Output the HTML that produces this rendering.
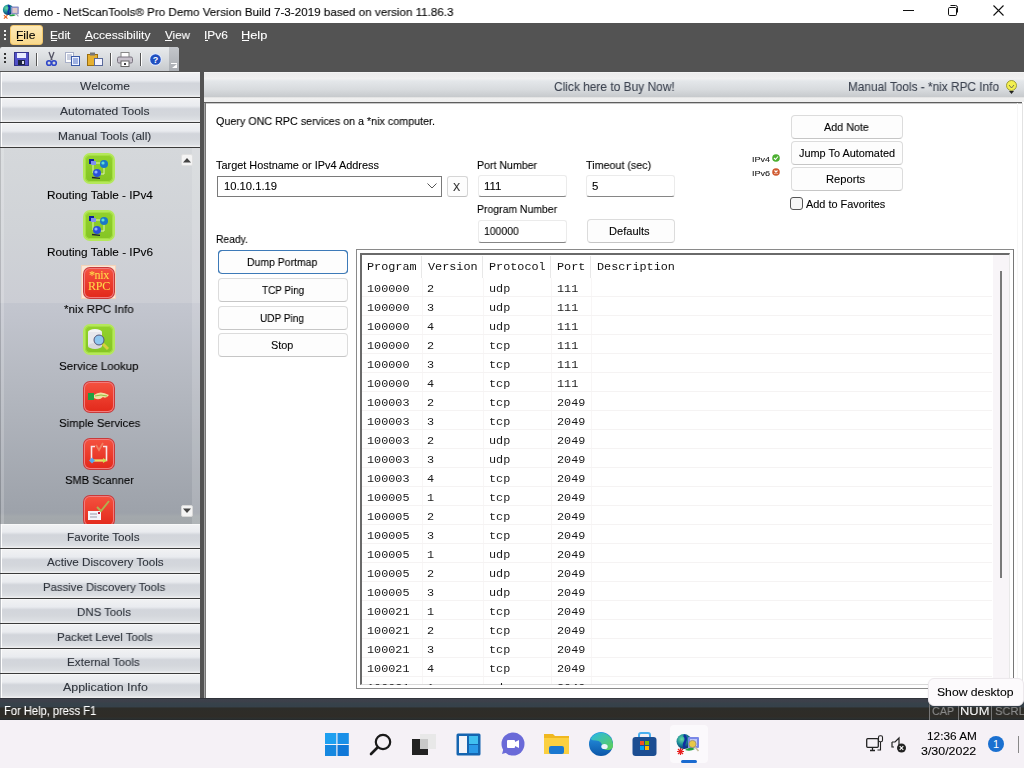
<!DOCTYPE html>
<html><head><meta charset="utf-8"><style>
*{box-sizing:border-box;margin:0;padding:0}
html,body{width:1024px;height:768px;overflow:hidden}
body{position:relative;background:#535353;font-family:"Liberation Sans",sans-serif}
.a{position:absolute}
.t{position:absolute;white-space:nowrap;will-change:transform;-webkit-text-stroke:0.1px currentColor}
svg{position:absolute;overflow:visible}
</style></head><body>
<div class="a" style="left:0px;top:0px;width:1024px;height:23px;background:#fff"></div>
<svg style="left:1px;top:3px" width="20" height="17" viewBox="0 0 28 24"><defs><radialGradient id="gl2" cx="0.35" cy="0.35" r="0.7"><stop offset="0" stop-color="#6ae0a0"/><stop offset="0.5" stop-color="#1a8a9a"/><stop offset="1" stop-color="#0a2a6a"/></radialGradient></defs><circle cx="10" cy="9.5" r="7.5" fill="url(#gl2)"/><path d="M10 3 q3 3 1 7 q-2 3 0 6" stroke="#1030a0" stroke-width="2.5" fill="none"/><rect x="14" y="5" width="11" height="11" rx="1" fill="#8a90c8"/><rect x="16" y="7" width="7" height="7" fill="#e0c8c8"/><path d="M21 15 l3.5 4" stroke="#a0a0b0" stroke-width="1.6"/><path d="M11 18 q5-4 10-1 q-5 3-10 1z" fill="#20a040"/><path d="M4 17 l5 5 M9 17 l-5 5" stroke="#e86020" stroke-width="1.6"/></svg>
<div class="t " style="left:23.53px;top:5px;font-size:11.700px;line-height:13px;color:#000;font-family:'Liberation Sans',sans-serif;transform:scaleX(0.9960);transform-origin:0 0;">demo - NetScanTools® Pro Demo Version Build 7-3-2019 based on version 11.86.3</div>
<div class="a" style="left:903px;top:10px;width:11px;height:1px;background:#111"></div>
<svg style="left:946px;top:4px" width="14" height="14" viewBox="0 0 14 14"><rect x="2.5" y="3.5" width="8" height="8" rx="1.2" fill="none" stroke="#111" stroke-width="1"/><path d="M4.5 1.5 h5 a2 2 0 0 1 2 2 v5" fill="none" stroke="#111" stroke-width="1"/></svg>
<svg style="left:993px;top:5px" width="12" height="12" viewBox="0 0 12 12"><path d="M0.5 0.5 L10.5 10.5 M10.5 0.5 L0.5 10.5" stroke="#111" stroke-width="1.1"/></svg>
<div class="a" style="left:0px;top:23px;width:1024px;height:23px;background:#535353"></div>
<div class="a" style="left:4px;top:30px;width:2px;height:2px;background:#f0f0f0"></div>
<div class="a" style="left:4px;top:34px;width:2px;height:2px;background:#f0f0f0"></div>
<div class="a" style="left:4px;top:38px;width:2px;height:2px;background:#f0f0f0"></div>
<div class="a" style="left:10px;top:25px;width:33px;height:20px;background:linear-gradient(#fde9b6,#f9d98d);border:1px solid #f3c86b;border-radius:3px"></div>
<div class="t " style="left:16.13px;top:28px;font-size:11.700px;line-height:13px;color:#000;font-family:'Liberation Sans',sans-serif;transform:scaleX(1.0313);transform-origin:0 0;">File</div>
<div class="a" style="left:17px;top:40px;width:6px;height:1px;background:#000"></div>
<div class="t " style="left:49.55px;top:28px;font-size:11.700px;line-height:13px;color:#fff;font-family:'Liberation Sans',sans-serif;transform:scaleX(1.0101);transform-origin:0 0;">Edit</div>
<div class="a" style="left:51px;top:40px;width:6px;height:1px;background:#fff"></div>
<div class="t " style="left:84.50px;top:28px;font-size:11.700px;line-height:13px;color:#fff;font-family:'Liberation Sans',sans-serif;transform:scaleX(1.0272);transform-origin:0 0;">Accessibility</div>
<div class="a" style="left:85px;top:40px;width:7px;height:1px;background:#fff"></div>
<div class="t " style="left:165.00px;top:28px;font-size:11.700px;line-height:13px;color:#fff;font-family:'Liberation Sans',sans-serif;transform:scaleX(0.9892);transform-origin:0 0;">View</div>
<div class="a" style="left:165px;top:40px;width:7px;height:1px;background:#fff"></div>
<div class="t " style="left:204.13px;top:28px;font-size:11.700px;line-height:13px;color:#fff;font-family:'Liberation Sans',sans-serif;transform:scaleX(1.0192);transform-origin:0 0;">IPv6</div>
<div class="a" style="left:205px;top:40px;width:3px;height:1px;background:#fff"></div>
<div class="t " style="left:240.98px;top:28px;font-size:11.700px;line-height:13px;color:#fff;font-family:'Liberation Sans',sans-serif;transform:scaleX(1.0926);transform-origin:0 0;">Help</div>
<div class="a" style="left:242px;top:40px;width:7px;height:1px;background:#fff"></div>
<div class="a" style="left:0px;top:47px;width:179px;height:24px;background:linear-gradient(#e8eaec,#d9dcdf 50%,#c6c9cd);border-top-right-radius:3px;border-top-left-radius:2px"></div>
<div class="a" style="left:169px;top:47px;width:10px;height:24px;background:linear-gradient(#c4c7cb,#a9adb2);border-top-right-radius:3px"></div>
<div class="a" style="left:4px;top:53px;width:2px;height:2px;background:#333"></div>
<div class="a" style="left:4px;top:57px;width:2px;height:2px;background:#333"></div>
<div class="a" style="left:4px;top:61px;width:2px;height:2px;background:#333"></div>
<svg style="left:14px;top:52px" width="15" height="14" viewBox="0 0 15 14"><rect x="0.5" y="0.5" width="14" height="13" fill="#5050c8" stroke="#34348a"/><rect x="3" y="1" width="9" height="5" fill="#e8ecff"/><rect x="4" y="8" width="7" height="5" fill="#1c2440"/><rect x="8" y="9" width="2" height="3" fill="#dde"/></svg>
<div class="a" style="left:36px;top:53px;width:1px;height:13px;background:#555"></div>
<div class="a" style="left:37px;top:53px;width:1px;height:13px;background:#fff"></div>
<svg style="left:46px;top:52px" width="11" height="14" viewBox="0 0 11 14"><path d="M3 0 L6 8 M8 0 L5 8" stroke="#556" stroke-width="1.3"/><circle cx="3" cy="11" r="2.3" fill="none" stroke="#2f46c8" stroke-width="1.6"/><circle cx="8" cy="11" r="2.3" fill="none" stroke="#2f46c8" stroke-width="1.6"/></svg>
<svg style="left:65px;top:52px" width="15" height="14" viewBox="0 0 15 14"><rect x="0.5" y="0.5" width="8" height="10" fill="#fff" stroke="#a8b0c8"/><path d="M2 3h5M2 5h5M2 7h5" stroke="#7a88b0" stroke-width="0.8"/><rect x="6.5" y="4.5" width="8" height="9" fill="#f0f4ff" stroke="#3a5aa8"/><path d="M8 7h5M8 9h5M8 11h5" stroke="#3a60c0" stroke-width="0.9"/></svg>
<svg style="left:87px;top:52px" width="16" height="14" viewBox="0 0 16 14"><rect x="0.5" y="2.5" width="10" height="11" fill="#e6b030" stroke="#9a6e10"/><rect x="3" y="0.5" width="5" height="3" fill="#777"/><rect x="7.5" y="6.5" width="8" height="7" fill="#f4f4ff" stroke="#5a6a9a"/></svg>
<div class="a" style="left:110px;top:53px;width:1px;height:13px;background:#555"></div>
<div class="a" style="left:111px;top:53px;width:1px;height:13px;background:#fff"></div>
<svg style="left:117px;top:52px" width="16" height="15" viewBox="0 0 16 15"><rect x="4" y="0.5" width="8" height="5" fill="#fff" stroke="#888"/><rect x="0.5" y="5" width="15" height="6" rx="1.5" fill="#c8c2cc" stroke="#7a7480"/><rect x="4" y="9" width="8" height="5.5" fill="#fff" stroke="#666"/><rect x="7" y="11" width="2" height="2" fill="#444"/></svg>
<div class="a" style="left:140px;top:53px;width:1px;height:13px;background:#555"></div>
<div class="a" style="left:141px;top:53px;width:1px;height:13px;background:#fff"></div>
<svg style="left:149px;top:53px" width="13" height="13" viewBox="0 0 13 13"><circle cx="6.5" cy="6.5" r="6.3" fill="#dfe8ff"/><circle cx="6.5" cy="6.5" r="5.3" fill="#1f4fc0"/><text x="6.5" y="10" font-size="9" font-weight="bold" text-anchor="middle" fill="#fff" font-family="Liberation Sans">?</text></svg>
<div class="a" style="left:171px;top:63px;width:6px;height:1px;background:#fff"></div>
<svg style="left:171px;top:64px" width="7" height="5" viewBox="0 0 7 5"><path d="M1 4 L6 4 L6 0z" fill="#fff"/></svg>
<div class="a" style="left:0px;top:72px;width:200px;height:25px;background:linear-gradient(#fdfdfd 0,#f0f1f3 5%,#e9ebef 33%,#d2d5db 45%,#d4d7dc 70%,#dcdfe3 90%,#e8e9ec 95%,#f0f0f0 100%);border-left:1px solid #fff;box-shadow:inset 1px 0 0 #fff"></div>
<div class="a" style="left:0px;top:72px;width:1px;height:25px;background:#b9bcc1"></div>
<div class="t " style="left:79.80px;top:79px;font-size:11.700px;line-height:13px;color:#30353d;font-family:'Liberation Sans',sans-serif;transform:scaleX(1.0294);transform-origin:0 0;">Welcome</div>
<div class="a" style="left:0px;top:97px;width:200px;height:1px;background:#3a3a3a"></div>
<div class="a" style="left:0px;top:98px;width:200px;height:24px;background:linear-gradient(#fdfdfd 0,#f0f1f3 5%,#e9ebef 33%,#d2d5db 45%,#d4d7dc 70%,#dcdfe3 90%,#e8e9ec 95%,#f0f0f0 100%);border-left:1px solid #fff;box-shadow:inset 1px 0 0 #fff"></div>
<div class="a" style="left:0px;top:98px;width:1px;height:24px;background:#b9bcc1"></div>
<div class="t " style="left:59.70px;top:104px;font-size:11.700px;line-height:13px;color:#30353d;font-family:'Liberation Sans',sans-serif;transform:scaleX(1.0314);transform-origin:0 0;">Automated Tools</div>
<div class="a" style="left:0px;top:122px;width:200px;height:1px;background:#3a3a3a"></div>
<div class="a" style="left:0px;top:123px;width:200px;height:24px;background:linear-gradient(#fdfdfd 0,#f0f1f3 5%,#e9ebef 33%,#d2d5db 45%,#d4d7dc 70%,#dcdfe3 90%,#e8e9ec 95%,#f0f0f0 100%);border-left:1px solid #fff;box-shadow:inset 1px 0 0 #fff"></div>
<div class="a" style="left:0px;top:123px;width:1px;height:24px;background:#b9bcc1"></div>
<div class="t " style="left:57.64px;top:129px;font-size:11.700px;line-height:13px;color:#30353d;font-family:'Liberation Sans',sans-serif;transform:scaleX(1.0216);transform-origin:0 0;">Manual Tools (all)</div>
<div class="a" style="left:0px;top:147px;width:200px;height:1px;background:#3a3a3a"></div>
<div class="a" style="left:0px;top:148px;width:200px;height:376px;background:linear-gradient(#d5d8db 0,#d0d3d7 22%,#cbcdd4 41.2%,#c3c6cf 41.3%,#b3b7bf 65%,#9da2aa 97%,#a3a8ac 98%,#a2a7ab 100%)"></div>
<div class="a" style="left:1px;top:148px;width:3px;height:376px;background:rgba(255,255,255,0.18)"></div>
<div class="a" style="left:0px;top:148px;width:1px;height:376px;background:rgba(0,0,0,0.12)"></div>
<div class="a" style="left:192px;top:148px;width:8px;height:376px;background:rgba(255,255,255,0.15)"></div>
<div class="a" style="left:181px;top:154px;width:12px;height:12px;background:#f4f4f4;border:1px solid #e0e0e0;border-radius:2px"></div>
<svg style="left:182px;top:157px" width="10" height="6" viewBox="0 0 10 6"><path d="M1 5.5 L5 1 L9 5.5z" fill="#444"/></svg>
<div class="a" style="left:181px;top:505px;width:12px;height:12px;background:#f4f4f4;border:1px solid #d8d8d8;border-radius:2px"></div>
<svg style="left:182px;top:508px" width="10" height="6" viewBox="0 0 10 6"><path d="M1 0.5 L5 5 L9 0.5z" fill="#444"/></svg>
<div class="a" style="left:83px;top:153px;width:32px;height:31px;border-radius:7px;background:#b4e85a"></div>
<div class="a" style="left:85px;top:155px;width:28px;height:27px;border-radius:5px;background:linear-gradient(#92d22c,#84c424);box-shadow:inset 0 0 0 1px #a6de44"></div>
<svg style="left:84px;top:155px" width="29" height="28" viewBox="0 0 29 28"><path d="M9 8 h10 M9 8 v10 M20 10 v9 h-8" stroke="#dff5b0" stroke-width="1" fill="none"/><rect x="5" y="4" width="5" height="5" fill="#1020a0"/><rect x="7" y="6" width="5" height="4" fill="#8090f0"/><circle cx="20" cy="9" r="4" fill="#1a78c8"/><circle cx="19" cy="8" r="1.6" fill="#60e0d0"/><circle cx="13" cy="18" r="4" fill="#2a50d8"/><circle cx="12" cy="17" r="1.6" fill="#90b0ff"/><path d="M8 22.5 l8 0.8" stroke="#223" stroke-width="1.3"/></svg>
<div class="t " style="left:46.56px;top:188px;font-size:11.700px;line-height:13px;color:#000;font-family:'Liberation Sans',sans-serif;transform:scaleX(1.0077);transform-origin:0 0;">Routing Table - IPv4</div>
<div class="a" style="left:83px;top:210px;width:32px;height:31px;border-radius:7px;background:#b4e85a"></div>
<div class="a" style="left:85px;top:212px;width:28px;height:27px;border-radius:5px;background:linear-gradient(#92d22c,#84c424);box-shadow:inset 0 0 0 1px #a6de44"></div>
<svg style="left:84px;top:212px" width="29" height="28" viewBox="0 0 29 28"><path d="M9 8 h10 M9 8 v10 M20 10 v9 h-8" stroke="#dff5b0" stroke-width="1" fill="none"/><rect x="5" y="4" width="5" height="5" fill="#1020a0"/><rect x="7" y="6" width="5" height="4" fill="#8090f0"/><circle cx="20" cy="9" r="4" fill="#1a78c8"/><circle cx="19" cy="8" r="1.6" fill="#60e0d0"/><circle cx="13" cy="18" r="4" fill="#2a50d8"/><circle cx="12" cy="17" r="1.6" fill="#90b0ff"/><path d="M8 22.5 l8 0.8" stroke="#223" stroke-width="1.3"/></svg>
<div class="t " style="left:46.56px;top:245px;font-size:11.700px;line-height:13px;color:#000;font-family:'Liberation Sans',sans-serif;transform:scaleX(1.0089);transform-origin:0 0;">Routing Table - IPv6</div>
<div class="a" style="left:81px;top:265px;width:35px;height:34px;background:#fbe6d6;border:1px solid #f3d2b8"></div>
<div class="a" style="left:83px;top:267px;width:32px;height:32px;border-radius:7px;background:#c83a3a"></div>
<div class="a" style="left:84px;top:268px;width:30px;height:30px;border-radius:6px;background:#f27c7c"></div>
<div class="a" style="left:85px;top:269px;width:28px;height:28px;border-radius:5px;background:linear-gradient(#f4503e,#e32a1c)"></div>
<div class="t" style="left:85px;top:270px;width:28px;text-align:center;font-family:'Liberation Serif',serif;font-size:12px;line-height:11px;color:#ffd84a;letter-spacing:-0.3px">*nix<br>RPC</div>
<div class="t " style="left:64.08px;top:302px;font-size:11.700px;line-height:13px;color:#000;font-family:'Liberation Sans',sans-serif;transform:scaleX(0.9924);transform-origin:0 0;">*nix RPC Info</div>
<div class="a" style="left:83px;top:324px;width:32px;height:31px;border-radius:7px;background:#b4e85a"></div>
<div class="a" style="left:85px;top:326px;width:28px;height:27px;border-radius:5px;background:linear-gradient(#92d22c,#84c424);box-shadow:inset 0 0 0 1px #a6de44"></div>
<svg style="left:84px;top:326px" width="29" height="28" viewBox="0 0 29 28"><ellipse cx="11" cy="6" rx="7" ry="3" fill="#f4f4f4"/><rect x="4" y="6" width="14" height="14" fill="#e8e8ec"/><ellipse cx="11" cy="20" rx="7" ry="3" fill="#d8d8dc"/><circle cx="15" cy="14" r="5" fill="#8fc8f0" stroke="#557" stroke-width="1"/><path d="M19 18 l5 5" stroke="#d8d040" stroke-width="3"/></svg>
<div class="t " style="left:59.04px;top:359px;font-size:11.700px;line-height:13px;color:#000;font-family:'Liberation Sans',sans-serif;transform:scaleX(0.9888);transform-origin:0 0;">Service Lookup</div>
<div class="a" style="left:83px;top:381px;width:32px;height:32px;border-radius:7px;background:#c83a3a"></div>
<div class="a" style="left:84px;top:382px;width:30px;height:30px;border-radius:6px;background:#f27c7c"></div>
<div class="a" style="left:85px;top:383px;width:28px;height:28px;border-radius:5px;background:linear-gradient(#f4503e,#e32a1c)"></div>
<svg style="left:85px;top:383px" width="28" height="28" viewBox="0 0 28 28"><rect x="3" y="10" width="6" height="7" fill="#20a040"/><path d="M9 12 q6-5 15 0 q-3 4-6 2 q-4 4-9 1z" fill="#f0e0a0"/><path d="M10 13 q6 -2 12 0" stroke="#90c040" stroke-width="1" fill="none"/></svg>
<div class="t " style="left:59.05px;top:416px;font-size:11.700px;line-height:13px;color:#000;font-family:'Liberation Sans',sans-serif;transform:scaleX(0.9691);transform-origin:0 0;">Simple Services</div>
<div class="a" style="left:83px;top:438px;width:32px;height:32px;border-radius:7px;background:#c83a3a"></div>
<div class="a" style="left:84px;top:439px;width:30px;height:30px;border-radius:6px;background:#f27c7c"></div>
<div class="a" style="left:85px;top:440px;width:28px;height:28px;border-radius:5px;background:linear-gradient(#f4503e,#e32a1c)"></div>
<svg style="left:85px;top:440px" width="28" height="28" viewBox="0 0 28 28"><path d="M10 6.5 H6.5 V20.5 H21.5 V6.5 H18" stroke="#f8e8e8" stroke-width="1.6" fill="none"/><path d="M11 5 l3 5 l4-7" stroke="#f08060" stroke-width="1.8" fill="none"/><path d="M8 20.5 h12" stroke="#e8e060" stroke-width="2"/><path d="M7 17.5 l3 3 l-3 3 l-3-3z" fill="#58a8f0"/><path d="M18 18 l4 2.5 l-4 2.5z" fill="#c8e050"/></svg>
<div class="t " style="left:64.95px;top:473px;font-size:11.700px;line-height:13px;color:#000;font-family:'Liberation Sans',sans-serif;transform:scaleX(0.9546);transform-origin:0 0;">SMB Scanner</div>
<div class="a" style="left:83px;top:495px;width:32px;height:32px;border-radius:7px;background:#c83a3a"></div>
<div class="a" style="left:84px;top:496px;width:30px;height:30px;border-radius:6px;background:#f27c7c"></div>
<div class="a" style="left:85px;top:497px;width:28px;height:28px;border-radius:5px;background:linear-gradient(#f4503e,#e32a1c)"></div>
<svg style="left:85px;top:497px" width="28" height="28" viewBox="0 0 28 28"><rect x="3" y="14" width="13" height="9" fill="#f4f4f8"/><path d="M5 17h7M5 20h7" stroke="#99a" stroke-width="1"/><rect x="13" y="15" width="2" height="2" fill="#c02040"/><path d="M12 10 l4 4 l8-10" stroke="#b0b050" stroke-width="2" fill="none"/></svg>
<div class="a" style="left:0px;top:524px;width:200px;height:24px;background:linear-gradient(#fdfdfd 0,#f0f1f3 5%,#e9ebef 33%,#d2d5db 45%,#d4d7dc 70%,#dcdfe3 90%,#e8e9ec 95%,#f0f0f0 100%);border-left:1px solid #fff;box-shadow:inset 1px 0 0 #fff"></div>
<div class="a" style="left:0px;top:524px;width:1px;height:24px;background:#b9bcc1"></div>
<div class="t " style="left:67.46px;top:530px;font-size:11.700px;line-height:13px;color:#30353d;font-family:'Liberation Sans',sans-serif;">Favorite Tools</div>
<div class="a" style="left:0px;top:548px;width:200px;height:1px;background:#3a3a3a"></div>
<div class="a" style="left:0px;top:549px;width:200px;height:24px;background:linear-gradient(#fdfdfd 0,#f0f1f3 5%,#e9ebef 33%,#d2d5db 45%,#d4d7dc 70%,#dcdfe3 90%,#e8e9ec 95%,#f0f0f0 100%);border-left:1px solid #fff;box-shadow:inset 1px 0 0 #fff"></div>
<div class="a" style="left:0px;top:549px;width:1px;height:24px;background:#b9bcc1"></div>
<div class="t " style="left:46.80px;top:555px;font-size:11.700px;line-height:13px;color:#30353d;font-family:'Liberation Sans',sans-serif;">Active Discovery Tools</div>
<div class="a" style="left:0px;top:573px;width:200px;height:1px;background:#3a3a3a"></div>
<div class="a" style="left:0px;top:574px;width:200px;height:24px;background:linear-gradient(#fdfdfd 0,#f0f1f3 5%,#e9ebef 33%,#d2d5db 45%,#d4d7dc 70%,#dcdfe3 90%,#e8e9ec 95%,#f0f0f0 100%);border-left:1px solid #fff;box-shadow:inset 1px 0 0 #fff"></div>
<div class="a" style="left:0px;top:574px;width:1px;height:24px;background:#b9bcc1"></div>
<div class="t " style="left:42.59px;top:580px;font-size:11.700px;line-height:13px;color:#30353d;font-family:'Liberation Sans',sans-serif;transform:scaleX(0.9711);transform-origin:0 0;">Passive Discovery Tools</div>
<div class="a" style="left:0px;top:598px;width:200px;height:1px;background:#3a3a3a"></div>
<div class="a" style="left:0px;top:599px;width:200px;height:24px;background:linear-gradient(#fdfdfd 0,#f0f1f3 5%,#e9ebef 33%,#d2d5db 45%,#d4d7dc 70%,#dcdfe3 90%,#e8e9ec 95%,#f0f0f0 100%);border-left:1px solid #fff;box-shadow:inset 1px 0 0 #fff"></div>
<div class="a" style="left:0px;top:599px;width:1px;height:24px;background:#b9bcc1"></div>
<div class="t " style="left:77.38px;top:605px;font-size:11.700px;line-height:13px;color:#30353d;font-family:'Liberation Sans',sans-serif;transform:scaleX(0.9792);transform-origin:0 0;">DNS Tools</div>
<div class="a" style="left:0px;top:623px;width:200px;height:1px;background:#3a3a3a"></div>
<div class="a" style="left:0px;top:624px;width:200px;height:24px;background:linear-gradient(#fdfdfd 0,#f0f1f3 5%,#e9ebef 33%,#d2d5db 45%,#d4d7dc 70%,#dcdfe3 90%,#e8e9ec 95%,#f0f0f0 100%);border-left:1px solid #fff;box-shadow:inset 1px 0 0 #fff"></div>
<div class="a" style="left:0px;top:624px;width:1px;height:24px;background:#b9bcc1"></div>
<div class="t " style="left:56.58px;top:630px;font-size:11.700px;line-height:13px;color:#30353d;font-family:'Liberation Sans',sans-serif;transform:scaleX(0.9827);transform-origin:0 0;">Packet Level Tools</div>
<div class="a" style="left:0px;top:648px;width:200px;height:1px;background:#3a3a3a"></div>
<div class="a" style="left:0px;top:649px;width:200px;height:24px;background:linear-gradient(#fdfdfd 0,#f0f1f3 5%,#e9ebef 33%,#d2d5db 45%,#d4d7dc 70%,#dcdfe3 90%,#e8e9ec 95%,#f0f0f0 100%);border-left:1px solid #fff;box-shadow:inset 1px 0 0 #fff"></div>
<div class="a" style="left:0px;top:649px;width:1px;height:24px;background:#b9bcc1"></div>
<div class="t " style="left:67.47px;top:655px;font-size:11.700px;line-height:13px;color:#30353d;font-family:'Liberation Sans',sans-serif;transform:scaleX(0.9937);transform-origin:0 0;">External Tools</div>
<div class="a" style="left:0px;top:673px;width:200px;height:1px;background:#3a3a3a"></div>
<div class="a" style="left:0px;top:674px;width:200px;height:24px;background:linear-gradient(#fdfdfd 0,#f0f1f3 5%,#e9ebef 33%,#d2d5db 45%,#d4d7dc 70%,#dcdfe3 90%,#e8e9ec 95%,#f0f0f0 100%);border-left:1px solid #fff;box-shadow:inset 1px 0 0 #fff"></div>
<div class="a" style="left:0px;top:674px;width:1px;height:24px;background:#b9bcc1"></div>
<div class="t " style="left:62.50px;top:680px;font-size:11.700px;line-height:13px;color:#30353d;font-family:'Liberation Sans',sans-serif;transform:scaleX(1.0608);transform-origin:0 0;">Application Info</div>
<div class="a" style="left:204px;top:72px;width:820px;height:627px;background:#fff"></div>
<div class="a" style="left:204px;top:72px;width:820px;height:30px;background:linear-gradient(#f8f8f8 0,#ededed 4%,#efefef 17%,#f1f1f1 22%,#e4e7ea 30%,#d7dadd 60%,#c7cacd 82%,#d8d8d8 83.3%,#efefef 86.6%,#f0f0f0 100%)"></div>
<div class="a" style="left:204px;top:102px;width:818px;height:1px;background:#5e5e5e"></div>
<div class="a" style="left:204px;top:103px;width:818px;height:1px;background:#c8c8c8"></div>
<div class="t " style="left:553.80px;top:80px;font-size:12.700px;line-height:14px;color:#3c4350;font-family:'Liberation Sans',sans-serif;transform:scaleX(0.9405);transform-origin:0 0;">Click here to Buy Now!</div>
<div class="t " style="left:847.55px;top:80px;font-size:12.700px;line-height:14px;color:#3c4350;font-family:'Liberation Sans',sans-serif;transform:scaleX(0.9324);transform-origin:0 0;">Manual Tools - *nix RPC Info</div>
<svg style="left:1005px;top:80px" width="13" height="14" viewBox="0 0 13 14"><circle cx="6.5" cy="5.5" r="5" fill="#f4f050" stroke="#8a8a20" stroke-width="0.8"/><path d="M4 5 l2.5 3 l2.5-3" stroke="#555" fill="none" stroke-width="0.8"/><path d="M4 11 h5 l-2.5 3z" fill="#222"/></svg>
<div class="a" style="left:204px;top:103px;width:1px;height:595px;background:#a4a4a4"></div>
<div class="a" style="left:205px;top:103px;width:1px;height:595px;background:#747474"></div>
<div class="a" style="left:1017px;top:103px;width:1px;height:595px;background:#f6f6f6"></div>
<div class="a" style="left:1022px;top:103px;width:1px;height:595px;background:#e2e2e2"></div>
<div class="t " style="left:216.17px;top:115px;font-size:10.900px;line-height:12px;color:#000;font-family:'Liberation Sans',sans-serif;transform:scaleX(0.9862);transform-origin:0 0;">Query ONC RPC services on a *nix computer.</div>
<div class="t " style="left:216.38px;top:159px;font-size:10.900px;line-height:12px;color:#000;font-family:'Liberation Sans',sans-serif;">Target Hostname or IPv4 Address</div>
<div class="a" style="left:217px;top:176px;width:225px;height:21px;background:#fff;border:1px solid #7a7a7a"></div>
<div class="t " style="left:223.61px;top:180px;font-size:10.900px;line-height:12px;color:#000;font-family:'Liberation Sans',sans-serif;transform:scaleX(1.0309);transform-origin:0 0;">10.10.1.19</div>
<svg style="left:427px;top:183px" width="10" height="6" viewBox="0 0 10 6"><path d="M0.5 0.5 L5 5 L9.5 0.5" stroke="#555" fill="none" stroke-width="1"/></svg>
<div class="a" style="left:447px;top:176px;width:21px;height:21px;background:#fdfdfd;border:1px solid #d6d6d6;border-bottom-color:#c0c0c0;border-radius:3px"></div>
<div class="t " style="left:453.09px;top:181px;font-size:10.900px;line-height:12px;color:#222;font-family:'Liberation Sans',sans-serif;transform:scaleX(0.9757);transform-origin:0 0;">X</div>
<div class="t " style="left:476.75px;top:159px;font-size:10.900px;line-height:12px;color:#000;font-family:'Liberation Sans',sans-serif;transform:scaleX(0.9733);transform-origin:0 0;">Port Number</div>
<div class="t " style="left:585.78px;top:159px;font-size:10.900px;line-height:12px;color:#000;font-family:'Liberation Sans',sans-serif;transform:scaleX(0.9862);transform-origin:0 0;">Timeout (sec)</div>
<div class="a" style="left:478px;top:175px;width:89px;height:22px;background:#fff;border:1px solid #ebebeb;border-bottom:1px solid #868686;border-radius:3px"></div>
<div class="a" style="left:586px;top:175px;width:89px;height:22px;background:#fff;border:1px solid #ebebeb;border-bottom:1px solid #868686;border-radius:3px"></div>
<div class="t " style="left:484.20px;top:180px;font-size:10.900px;line-height:12px;color:#000;font-family:'Liberation Sans',sans-serif;transform:scaleX(1.0485);transform-origin:0 0;">111</div>
<div class="t " style="left:592.04px;top:180px;font-size:10.900px;line-height:12px;color:#000;font-family:'Liberation Sans',sans-serif;transform:scaleX(1.0512);transform-origin:0 0;">5</div>
<div class="t " style="left:476.76px;top:203px;font-size:10.900px;line-height:12px;color:#000;font-family:'Liberation Sans',sans-serif;transform:scaleX(0.9586);transform-origin:0 0;">Program Number</div>
<div class="a" style="left:478px;top:220px;width:89px;height:23px;background:#fff;border:1px solid #ebebeb;border-bottom:1px solid #868686;border-radius:3px"></div>
<div class="t " style="left:484.27px;top:225px;font-size:10.900px;line-height:12px;color:#000;font-family:'Liberation Sans',sans-serif;transform:scaleX(0.9572);transform-origin:0 0;">100000</div>
<div class="a" style="left:587px;top:219px;width:88px;height:24px;background:#fdfdfd;border:1px solid #dcdcdc;border-bottom-color:#c6c6c6;border-radius:4px"></div>
<div class="t " style="left:608.61px;top:225px;font-size:10.900px;line-height:12px;color:#000;font-family:'Liberation Sans',sans-serif;transform:scaleX(1.0179);transform-origin:0 0;">Defaults</div>
<div class="a" style="left:791px;top:115px;width:112px;height:24px;background:#fdfdfd;border:1px solid #dcdcdc;border-bottom-color:#c6c6c6;border-radius:4px"></div>
<div class="t " style="left:823.90px;top:121px;font-size:10.900px;line-height:12px;color:#000;font-family:'Liberation Sans',sans-serif;transform:scaleX(0.9885);transform-origin:0 0;">Add Note</div>
<div class="a" style="left:791px;top:141px;width:112px;height:24px;background:#fdfdfd;border:1px solid #dcdcdc;border-bottom-color:#c6c6c6;border-radius:4px"></div>
<div class="t " style="left:798.79px;top:147px;font-size:10.900px;line-height:12px;color:#000;font-family:'Liberation Sans',sans-serif;">Jump To Automated</div>
<div class="a" style="left:791px;top:167px;width:112px;height:24px;background:#fdfdfd;border:1px solid #dcdcdc;border-bottom-color:#c6c6c6;border-radius:4px"></div>
<div class="t " style="left:826.40px;top:173px;font-size:10.900px;line-height:12px;color:#000;font-family:'Liberation Sans',sans-serif;transform:scaleX(1.0284);transform-origin:0 0;">Reports</div>
<div class="a" style="left:790px;top:197px;width:13px;height:13px;background:#f6f6f6;border:1px solid #555;border-radius:3px"></div>
<div class="t " style="left:806.00px;top:198px;font-size:10.900px;line-height:12px;color:#000;font-family:'Liberation Sans',sans-serif;">Add to Favorites</div>
<div class="t " style="left:752.19px;top:155px;font-size:7.600px;line-height:9px;color:#222;font-family:'Liberation Sans',sans-serif;transform:scaleX(1.1898);transform-origin:0 0;">IPv4</div>
<div class="t " style="left:752.18px;top:169px;font-size:7.600px;line-height:9px;color:#222;font-family:'Liberation Sans',sans-serif;transform:scaleX(1.1962);transform-origin:0 0;">IPv6</div>
<svg style="left:772px;top:154px" width="8" height="8" viewBox="0 0 8 8"><circle cx="4" cy="4" r="3.8" fill="#4caf30"/><path d="M2 4 l1.5 1.5 l2.5-3" stroke="#fff" stroke-width="1.1" fill="none"/></svg>
<svg style="left:772px;top:168px" width="8" height="8" viewBox="0 0 8 8"><circle cx="4" cy="4" r="3.8" fill="#d05a30"/><path d="M2.5 2.5 l3 3 M5.5 2.5 l-3 3" stroke="#fff" stroke-width="1.1"/></svg>
<div class="t " style="left:215.98px;top:233px;font-size:10.900px;line-height:12px;color:#000;font-family:'Liberation Sans',sans-serif;transform:scaleX(0.9456);transform-origin:0 0;">Ready.</div>
<div class="a" style="left:218px;top:250px;width:130px;height:24px;background:#fdfdfd;border:1px solid #3d7ab8;border-bottom-color:#c6c6c6;border-radius:4px"></div>
<div class="t " style="left:246.96px;top:256px;font-size:10.900px;line-height:12px;color:#000;font-family:'Liberation Sans',sans-serif;transform:scaleX(0.9605);transform-origin:0 0;">Dump Portmap</div>
<div class="a" style="left:218px;top:250px;width:130px;height:24px;border:1px solid #3d7ab8;border-radius:4px"></div>
<div class="a" style="left:218px;top:278px;width:130px;height:24px;background:#fdfdfd;border:1px solid #dcdcdc;border-bottom-color:#c6c6c6;border-radius:4px"></div>
<div class="t " style="left:261.60px;top:284px;font-size:10.900px;line-height:12px;color:#000;font-family:'Liberation Sans',sans-serif;transform:scaleX(0.9109);transform-origin:0 0;">TCP Ping</div>
<div class="a" style="left:218px;top:306px;width:130px;height:24px;background:#fdfdfd;border:1px solid #dcdcdc;border-bottom-color:#c6c6c6;border-radius:4px"></div>
<div class="t " style="left:259.90px;top:312px;font-size:10.900px;line-height:12px;color:#000;font-family:'Liberation Sans',sans-serif;transform:scaleX(0.9239);transform-origin:0 0;">UDP Ping</div>
<div class="a" style="left:218px;top:333px;width:130px;height:24px;background:#fdfdfd;border:1px solid #dcdcdc;border-bottom-color:#c6c6c6;border-radius:4px"></div>
<div class="t " style="left:271.37px;top:339px;font-size:10.900px;line-height:12px;color:#000;font-family:'Liberation Sans',sans-serif;transform:scaleX(0.9962);transform-origin:0 0;">Stop</div>
<div class="a" style="left:356px;top:249px;width:658px;height:440px;border:1px solid #8a8a8a;border-right-color:#777;border-bottom-color:#8a8a8a"></div>
<div class="a" style="left:360px;top:253px;width:650px;height:432px;background:#fff;border-top:2px solid #6a6a6a;border-left:2px solid #6a6a6a;border-bottom:1px solid #d8d8d8;border-right:1px solid #e8e8e8"></div>
<div class="a" style="left:993px;top:255px;width:16px;height:429px;background:#f8f5f8"></div>
<div class="a" style="left:1000px;top:271px;width:2px;height:307px;background:#7a7a7a"></div>
<div class="a" style="left:421px;top:256px;width:1px;height:22px;background:#e8e8e8"></div>
<div class="a" style="left:422px;top:278px;width:1px;height:406px;background:#f8f6f6"></div>
<div class="a" style="left:482px;top:256px;width:1px;height:22px;background:#e8e8e8"></div>
<div class="a" style="left:483px;top:278px;width:1px;height:406px;background:#f8f6f6"></div>
<div class="a" style="left:550px;top:256px;width:1px;height:22px;background:#e8e8e8"></div>
<div class="a" style="left:551px;top:278px;width:1px;height:406px;background:#f8f6f6"></div>
<div class="a" style="left:590px;top:256px;width:1px;height:22px;background:#e8e8e8"></div>
<div class="a" style="left:591px;top:278px;width:1px;height:406px;background:#f8f6f6"></div>
<div class="t " style="left:366.97px;top:260px;font-size:11.800px;line-height:14px;color:#111;font-family:'Liberation Mono',monospace;-webkit-text-stroke:0">Program</div>
<div class="t " style="left:428.00px;top:260px;font-size:11.800px;line-height:14px;color:#111;font-family:'Liberation Mono',monospace;-webkit-text-stroke:0">Version</div>
<div class="t " style="left:488.87px;top:260px;font-size:11.800px;line-height:14px;color:#111;font-family:'Liberation Mono',monospace;-webkit-text-stroke:0">Protocol</div>
<div class="t " style="left:556.67px;top:260px;font-size:11.800px;line-height:14px;color:#111;font-family:'Liberation Mono',monospace;-webkit-text-stroke:0">Port</div>
<div class="t " style="left:596.67px;top:260px;font-size:11.800px;line-height:14px;color:#111;font-family:'Liberation Mono',monospace;-webkit-text-stroke:0">Description</div>
<div class="a" style="left:362px;top:296px;width:630px;height:1px;background:#f5f3f3"></div>
<div class="t " style="left:366.97px;top:282px;font-size:11.800px;line-height:14px;color:#1a1a1a;font-family:'Liberation Mono',monospace;-webkit-text-stroke:0">100000</div>
<div class="t " style="left:427.17px;top:282px;font-size:11.800px;line-height:14px;color:#1a1a1a;font-family:'Liberation Mono',monospace;-webkit-text-stroke:0">2</div>
<div class="t " style="left:488.64px;top:282px;font-size:11.800px;line-height:14px;color:#1a1a1a;font-family:'Liberation Mono',monospace;-webkit-text-stroke:0">udp</div>
<div class="t " style="left:556.67px;top:282px;font-size:11.800px;line-height:14px;color:#1a1a1a;font-family:'Liberation Mono',monospace;-webkit-text-stroke:0">111</div>
<div class="a" style="left:362px;top:315px;width:630px;height:1px;background:#f5f3f3"></div>
<div class="t " style="left:366.97px;top:301px;font-size:11.800px;line-height:14px;color:#1a1a1a;font-family:'Liberation Mono',monospace;-webkit-text-stroke:0">100000</div>
<div class="t " style="left:427.29px;top:301px;font-size:11.800px;line-height:14px;color:#1a1a1a;font-family:'Liberation Mono',monospace;-webkit-text-stroke:0">3</div>
<div class="t " style="left:488.64px;top:301px;font-size:11.800px;line-height:14px;color:#1a1a1a;font-family:'Liberation Mono',monospace;-webkit-text-stroke:0">udp</div>
<div class="t " style="left:556.67px;top:301px;font-size:11.800px;line-height:14px;color:#1a1a1a;font-family:'Liberation Mono',monospace;-webkit-text-stroke:0">111</div>
<div class="a" style="left:362px;top:334px;width:630px;height:1px;background:#f5f3f3"></div>
<div class="t " style="left:366.97px;top:320px;font-size:11.800px;line-height:14px;color:#1a1a1a;font-family:'Liberation Mono',monospace;-webkit-text-stroke:0">100000</div>
<div class="t " style="left:427.41px;top:320px;font-size:11.800px;line-height:14px;color:#1a1a1a;font-family:'Liberation Mono',monospace;-webkit-text-stroke:0">4</div>
<div class="t " style="left:488.64px;top:320px;font-size:11.800px;line-height:14px;color:#1a1a1a;font-family:'Liberation Mono',monospace;-webkit-text-stroke:0">udp</div>
<div class="t " style="left:556.67px;top:320px;font-size:11.800px;line-height:14px;color:#1a1a1a;font-family:'Liberation Mono',monospace;-webkit-text-stroke:0">111</div>
<div class="a" style="left:362px;top:353px;width:630px;height:1px;background:#f5f3f3"></div>
<div class="t " style="left:366.97px;top:339px;font-size:11.800px;line-height:14px;color:#1a1a1a;font-family:'Liberation Mono',monospace;-webkit-text-stroke:0">100000</div>
<div class="t " style="left:427.17px;top:339px;font-size:11.800px;line-height:14px;color:#1a1a1a;font-family:'Liberation Mono',monospace;-webkit-text-stroke:0">2</div>
<div class="t " style="left:488.64px;top:339px;font-size:11.800px;line-height:14px;color:#1a1a1a;font-family:'Liberation Mono',monospace;-webkit-text-stroke:0">tcp</div>
<div class="t " style="left:556.67px;top:339px;font-size:11.800px;line-height:14px;color:#1a1a1a;font-family:'Liberation Mono',monospace;-webkit-text-stroke:0">111</div>
<div class="a" style="left:362px;top:372px;width:630px;height:1px;background:#f5f3f3"></div>
<div class="t " style="left:366.97px;top:358px;font-size:11.800px;line-height:14px;color:#1a1a1a;font-family:'Liberation Mono',monospace;-webkit-text-stroke:0">100000</div>
<div class="t " style="left:427.29px;top:358px;font-size:11.800px;line-height:14px;color:#1a1a1a;font-family:'Liberation Mono',monospace;-webkit-text-stroke:0">3</div>
<div class="t " style="left:488.64px;top:358px;font-size:11.800px;line-height:14px;color:#1a1a1a;font-family:'Liberation Mono',monospace;-webkit-text-stroke:0">tcp</div>
<div class="t " style="left:556.67px;top:358px;font-size:11.800px;line-height:14px;color:#1a1a1a;font-family:'Liberation Mono',monospace;-webkit-text-stroke:0">111</div>
<div class="a" style="left:362px;top:391px;width:630px;height:1px;background:#f5f3f3"></div>
<div class="t " style="left:366.97px;top:377px;font-size:11.800px;line-height:14px;color:#1a1a1a;font-family:'Liberation Mono',monospace;-webkit-text-stroke:0">100000</div>
<div class="t " style="left:427.41px;top:377px;font-size:11.800px;line-height:14px;color:#1a1a1a;font-family:'Liberation Mono',monospace;-webkit-text-stroke:0">4</div>
<div class="t " style="left:488.64px;top:377px;font-size:11.800px;line-height:14px;color:#1a1a1a;font-family:'Liberation Mono',monospace;-webkit-text-stroke:0">tcp</div>
<div class="t " style="left:556.67px;top:377px;font-size:11.800px;line-height:14px;color:#1a1a1a;font-family:'Liberation Mono',monospace;-webkit-text-stroke:0">111</div>
<div class="a" style="left:362px;top:410px;width:630px;height:1px;background:#f5f3f3"></div>
<div class="t " style="left:366.97px;top:396px;font-size:11.800px;line-height:14px;color:#1a1a1a;font-family:'Liberation Mono',monospace;-webkit-text-stroke:0">100003</div>
<div class="t " style="left:427.17px;top:396px;font-size:11.800px;line-height:14px;color:#1a1a1a;font-family:'Liberation Mono',monospace;-webkit-text-stroke:0">2</div>
<div class="t " style="left:488.64px;top:396px;font-size:11.800px;line-height:14px;color:#1a1a1a;font-family:'Liberation Mono',monospace;-webkit-text-stroke:0">tcp</div>
<div class="t " style="left:556.67px;top:396px;font-size:11.800px;line-height:14px;color:#1a1a1a;font-family:'Liberation Mono',monospace;-webkit-text-stroke:0">2049</div>
<div class="a" style="left:362px;top:429px;width:630px;height:1px;background:#f5f3f3"></div>
<div class="t " style="left:366.97px;top:415px;font-size:11.800px;line-height:14px;color:#1a1a1a;font-family:'Liberation Mono',monospace;-webkit-text-stroke:0">100003</div>
<div class="t " style="left:427.29px;top:415px;font-size:11.800px;line-height:14px;color:#1a1a1a;font-family:'Liberation Mono',monospace;-webkit-text-stroke:0">3</div>
<div class="t " style="left:488.64px;top:415px;font-size:11.800px;line-height:14px;color:#1a1a1a;font-family:'Liberation Mono',monospace;-webkit-text-stroke:0">tcp</div>
<div class="t " style="left:556.67px;top:415px;font-size:11.800px;line-height:14px;color:#1a1a1a;font-family:'Liberation Mono',monospace;-webkit-text-stroke:0">2049</div>
<div class="a" style="left:362px;top:448px;width:630px;height:1px;background:#f5f3f3"></div>
<div class="t " style="left:366.97px;top:434px;font-size:11.800px;line-height:14px;color:#1a1a1a;font-family:'Liberation Mono',monospace;-webkit-text-stroke:0">100003</div>
<div class="t " style="left:427.17px;top:434px;font-size:11.800px;line-height:14px;color:#1a1a1a;font-family:'Liberation Mono',monospace;-webkit-text-stroke:0">2</div>
<div class="t " style="left:488.64px;top:434px;font-size:11.800px;line-height:14px;color:#1a1a1a;font-family:'Liberation Mono',monospace;-webkit-text-stroke:0">udp</div>
<div class="t " style="left:556.67px;top:434px;font-size:11.800px;line-height:14px;color:#1a1a1a;font-family:'Liberation Mono',monospace;-webkit-text-stroke:0">2049</div>
<div class="a" style="left:362px;top:467px;width:630px;height:1px;background:#f5f3f3"></div>
<div class="t " style="left:366.97px;top:453px;font-size:11.800px;line-height:14px;color:#1a1a1a;font-family:'Liberation Mono',monospace;-webkit-text-stroke:0">100003</div>
<div class="t " style="left:427.29px;top:453px;font-size:11.800px;line-height:14px;color:#1a1a1a;font-family:'Liberation Mono',monospace;-webkit-text-stroke:0">3</div>
<div class="t " style="left:488.64px;top:453px;font-size:11.800px;line-height:14px;color:#1a1a1a;font-family:'Liberation Mono',monospace;-webkit-text-stroke:0">udp</div>
<div class="t " style="left:556.67px;top:453px;font-size:11.800px;line-height:14px;color:#1a1a1a;font-family:'Liberation Mono',monospace;-webkit-text-stroke:0">2049</div>
<div class="a" style="left:362px;top:486px;width:630px;height:1px;background:#f5f3f3"></div>
<div class="t " style="left:366.97px;top:472px;font-size:11.800px;line-height:14px;color:#1a1a1a;font-family:'Liberation Mono',monospace;-webkit-text-stroke:0">100003</div>
<div class="t " style="left:427.41px;top:472px;font-size:11.800px;line-height:14px;color:#1a1a1a;font-family:'Liberation Mono',monospace;-webkit-text-stroke:0">4</div>
<div class="t " style="left:488.64px;top:472px;font-size:11.800px;line-height:14px;color:#1a1a1a;font-family:'Liberation Mono',monospace;-webkit-text-stroke:0">tcp</div>
<div class="t " style="left:556.67px;top:472px;font-size:11.800px;line-height:14px;color:#1a1a1a;font-family:'Liberation Mono',monospace;-webkit-text-stroke:0">2049</div>
<div class="a" style="left:362px;top:505px;width:630px;height:1px;background:#f5f3f3"></div>
<div class="t " style="left:366.97px;top:491px;font-size:11.800px;line-height:14px;color:#1a1a1a;font-family:'Liberation Mono',monospace;-webkit-text-stroke:0">100005</div>
<div class="t " style="left:427.17px;top:491px;font-size:11.800px;line-height:14px;color:#1a1a1a;font-family:'Liberation Mono',monospace;-webkit-text-stroke:0">1</div>
<div class="t " style="left:488.64px;top:491px;font-size:11.800px;line-height:14px;color:#1a1a1a;font-family:'Liberation Mono',monospace;-webkit-text-stroke:0">tcp</div>
<div class="t " style="left:556.67px;top:491px;font-size:11.800px;line-height:14px;color:#1a1a1a;font-family:'Liberation Mono',monospace;-webkit-text-stroke:0">2049</div>
<div class="a" style="left:362px;top:524px;width:630px;height:1px;background:#f5f3f3"></div>
<div class="t " style="left:366.97px;top:510px;font-size:11.800px;line-height:14px;color:#1a1a1a;font-family:'Liberation Mono',monospace;-webkit-text-stroke:0">100005</div>
<div class="t " style="left:427.17px;top:510px;font-size:11.800px;line-height:14px;color:#1a1a1a;font-family:'Liberation Mono',monospace;-webkit-text-stroke:0">2</div>
<div class="t " style="left:488.64px;top:510px;font-size:11.800px;line-height:14px;color:#1a1a1a;font-family:'Liberation Mono',monospace;-webkit-text-stroke:0">tcp</div>
<div class="t " style="left:556.67px;top:510px;font-size:11.800px;line-height:14px;color:#1a1a1a;font-family:'Liberation Mono',monospace;-webkit-text-stroke:0">2049</div>
<div class="a" style="left:362px;top:543px;width:630px;height:1px;background:#f5f3f3"></div>
<div class="t " style="left:366.97px;top:529px;font-size:11.800px;line-height:14px;color:#1a1a1a;font-family:'Liberation Mono',monospace;-webkit-text-stroke:0">100005</div>
<div class="t " style="left:427.29px;top:529px;font-size:11.800px;line-height:14px;color:#1a1a1a;font-family:'Liberation Mono',monospace;-webkit-text-stroke:0">3</div>
<div class="t " style="left:488.64px;top:529px;font-size:11.800px;line-height:14px;color:#1a1a1a;font-family:'Liberation Mono',monospace;-webkit-text-stroke:0">tcp</div>
<div class="t " style="left:556.67px;top:529px;font-size:11.800px;line-height:14px;color:#1a1a1a;font-family:'Liberation Mono',monospace;-webkit-text-stroke:0">2049</div>
<div class="a" style="left:362px;top:562px;width:630px;height:1px;background:#f5f3f3"></div>
<div class="t " style="left:366.97px;top:548px;font-size:11.800px;line-height:14px;color:#1a1a1a;font-family:'Liberation Mono',monospace;-webkit-text-stroke:0">100005</div>
<div class="t " style="left:427.17px;top:548px;font-size:11.800px;line-height:14px;color:#1a1a1a;font-family:'Liberation Mono',monospace;-webkit-text-stroke:0">1</div>
<div class="t " style="left:488.64px;top:548px;font-size:11.800px;line-height:14px;color:#1a1a1a;font-family:'Liberation Mono',monospace;-webkit-text-stroke:0">udp</div>
<div class="t " style="left:556.67px;top:548px;font-size:11.800px;line-height:14px;color:#1a1a1a;font-family:'Liberation Mono',monospace;-webkit-text-stroke:0">2049</div>
<div class="a" style="left:362px;top:581px;width:630px;height:1px;background:#f5f3f3"></div>
<div class="t " style="left:366.97px;top:567px;font-size:11.800px;line-height:14px;color:#1a1a1a;font-family:'Liberation Mono',monospace;-webkit-text-stroke:0">100005</div>
<div class="t " style="left:427.17px;top:567px;font-size:11.800px;line-height:14px;color:#1a1a1a;font-family:'Liberation Mono',monospace;-webkit-text-stroke:0">2</div>
<div class="t " style="left:488.64px;top:567px;font-size:11.800px;line-height:14px;color:#1a1a1a;font-family:'Liberation Mono',monospace;-webkit-text-stroke:0">udp</div>
<div class="t " style="left:556.67px;top:567px;font-size:11.800px;line-height:14px;color:#1a1a1a;font-family:'Liberation Mono',monospace;-webkit-text-stroke:0">2049</div>
<div class="a" style="left:362px;top:600px;width:630px;height:1px;background:#f5f3f3"></div>
<div class="t " style="left:366.97px;top:586px;font-size:11.800px;line-height:14px;color:#1a1a1a;font-family:'Liberation Mono',monospace;-webkit-text-stroke:0">100005</div>
<div class="t " style="left:427.29px;top:586px;font-size:11.800px;line-height:14px;color:#1a1a1a;font-family:'Liberation Mono',monospace;-webkit-text-stroke:0">3</div>
<div class="t " style="left:488.64px;top:586px;font-size:11.800px;line-height:14px;color:#1a1a1a;font-family:'Liberation Mono',monospace;-webkit-text-stroke:0">udp</div>
<div class="t " style="left:556.67px;top:586px;font-size:11.800px;line-height:14px;color:#1a1a1a;font-family:'Liberation Mono',monospace;-webkit-text-stroke:0">2049</div>
<div class="a" style="left:362px;top:619px;width:630px;height:1px;background:#f5f3f3"></div>
<div class="t " style="left:366.97px;top:605px;font-size:11.800px;line-height:14px;color:#1a1a1a;font-family:'Liberation Mono',monospace;-webkit-text-stroke:0">100021</div>
<div class="t " style="left:427.17px;top:605px;font-size:11.800px;line-height:14px;color:#1a1a1a;font-family:'Liberation Mono',monospace;-webkit-text-stroke:0">1</div>
<div class="t " style="left:488.64px;top:605px;font-size:11.800px;line-height:14px;color:#1a1a1a;font-family:'Liberation Mono',monospace;-webkit-text-stroke:0">tcp</div>
<div class="t " style="left:556.67px;top:605px;font-size:11.800px;line-height:14px;color:#1a1a1a;font-family:'Liberation Mono',monospace;-webkit-text-stroke:0">2049</div>
<div class="a" style="left:362px;top:638px;width:630px;height:1px;background:#f5f3f3"></div>
<div class="t " style="left:366.97px;top:624px;font-size:11.800px;line-height:14px;color:#1a1a1a;font-family:'Liberation Mono',monospace;-webkit-text-stroke:0">100021</div>
<div class="t " style="left:427.17px;top:624px;font-size:11.800px;line-height:14px;color:#1a1a1a;font-family:'Liberation Mono',monospace;-webkit-text-stroke:0">2</div>
<div class="t " style="left:488.64px;top:624px;font-size:11.800px;line-height:14px;color:#1a1a1a;font-family:'Liberation Mono',monospace;-webkit-text-stroke:0">tcp</div>
<div class="t " style="left:556.67px;top:624px;font-size:11.800px;line-height:14px;color:#1a1a1a;font-family:'Liberation Mono',monospace;-webkit-text-stroke:0">2049</div>
<div class="a" style="left:362px;top:657px;width:630px;height:1px;background:#f5f3f3"></div>
<div class="t " style="left:366.97px;top:643px;font-size:11.800px;line-height:14px;color:#1a1a1a;font-family:'Liberation Mono',monospace;-webkit-text-stroke:0">100021</div>
<div class="t " style="left:427.29px;top:643px;font-size:11.800px;line-height:14px;color:#1a1a1a;font-family:'Liberation Mono',monospace;-webkit-text-stroke:0">3</div>
<div class="t " style="left:488.64px;top:643px;font-size:11.800px;line-height:14px;color:#1a1a1a;font-family:'Liberation Mono',monospace;-webkit-text-stroke:0">tcp</div>
<div class="t " style="left:556.67px;top:643px;font-size:11.800px;line-height:14px;color:#1a1a1a;font-family:'Liberation Mono',monospace;-webkit-text-stroke:0">2049</div>
<div class="a" style="left:362px;top:676px;width:630px;height:1px;background:#f5f3f3"></div>
<div class="t " style="left:366.97px;top:662px;font-size:11.800px;line-height:14px;color:#1a1a1a;font-family:'Liberation Mono',monospace;-webkit-text-stroke:0">100021</div>
<div class="t " style="left:427.41px;top:662px;font-size:11.800px;line-height:14px;color:#1a1a1a;font-family:'Liberation Mono',monospace;-webkit-text-stroke:0">4</div>
<div class="t " style="left:488.64px;top:662px;font-size:11.800px;line-height:14px;color:#1a1a1a;font-family:'Liberation Mono',monospace;-webkit-text-stroke:0">tcp</div>
<div class="t " style="left:556.67px;top:662px;font-size:11.800px;line-height:14px;color:#1a1a1a;font-family:'Liberation Mono',monospace;-webkit-text-stroke:0">2049</div>
<div class="a" style="left:362px;top:680px;width:630px;height:5px;overflow:hidden">
<div class="t " style="left:4.97px;top:1px;font-size:11.800px;line-height:14px;color:#1a1a1a;font-family:'Liberation Mono',monospace;-webkit-text-stroke:0">100021</div>
<div class="t " style="left:65.17px;top:1px;font-size:11.800px;line-height:14px;color:#1a1a1a;font-family:'Liberation Mono',monospace;-webkit-text-stroke:0">1</div>
<div class="t " style="left:126.64px;top:1px;font-size:11.800px;line-height:14px;color:#1a1a1a;font-family:'Liberation Mono',monospace;-webkit-text-stroke:0">udp</div>
<div class="t " style="left:194.67px;top:1px;font-size:11.800px;line-height:14px;color:#1a1a1a;font-family:'Liberation Mono',monospace;-webkit-text-stroke:0">2049</div>
</div>
<div class="a" style="left:0px;top:698px;width:1024px;height:1px;background:#30333a"></div>
<div class="a" style="left:0px;top:699px;width:1024px;height:21px;background:linear-gradient(#3d414b 0,#3c404a 12%,#37424a 20%,#36414a 36%,#2d2d29 44%,#2f2c27 85%,#2c302f 92%,#25282a 100%)"></div>
<div class="t " style="left:4.11px;top:704px;font-size:12.200px;line-height:14px;color:#fff;font-family:'Liberation Sans',sans-serif;transform:scaleX(0.9132);transform-origin:0 0;">For Help, press F1</div>
<div class="a" style="left:929px;top:701px;width:1px;height:19px;background:#777"></div>
<div class="a" style="left:958px;top:701px;width:1px;height:19px;background:#777"></div>
<div class="a" style="left:991px;top:701px;width:1px;height:19px;background:#777"></div>
<div class="t " style="left:931.96px;top:704px;font-size:11.700px;line-height:13px;color:#8c8c8c;font-family:'Liberation Sans',sans-serif;transform:scaleX(0.9201);transform-origin:0 0;">CAP</div>
<div class="t " style="left:960.17px;top:704px;font-size:11.700px;line-height:13px;color:#f4f4f4;font-family:'Liberation Sans',sans-serif;transform:scaleX(1.1047);transform-origin:0 0;">NUM</div>
<div class="t " style="left:994.55px;top:704px;font-size:11.700px;line-height:13px;color:#8c8c8c;font-family:'Liberation Sans',sans-serif;transform:scaleX(0.9533);transform-origin:0 0;">SCRL</div>
<div class="a" style="left:0px;top:720px;width:1024px;height:48px;background:#f5f1f6"></div>
<svg style="left:325px;top:733px" width="24" height="23" viewBox="0 0 24 23"><rect x="0" y="0" width="11.3" height="11" fill="#1ea0f0"/><rect x="12.5" y="0" width="11.3" height="11" fill="#1a90e8"/><rect x="0" y="12" width="11.3" height="11" fill="#1688e0"/><rect x="12.5" y="12" width="11.3" height="11" fill="#1078d8"/></svg>
<svg style="left:369px;top:733px" width="24" height="23" viewBox="0 0 24 23"><circle cx="14" cy="9" r="7.2" fill="none" stroke="#1a1a1a" stroke-width="2.2"/><path d="M8.5 14.5 L2 21" stroke="#1a1a1a" stroke-width="2.6" stroke-linecap="round"/></svg>
<svg style="left:412px;top:733px" width="25" height="23" viewBox="0 0 25 23"><rect x="8" y="1" width="16" height="15" fill="#e8e8e8"/><rect x="0" y="6" width="16" height="16" fill="#222"/><rect x="8" y="6" width="8" height="10" fill="#c8c8c8"/></svg>
<svg style="left:456px;top:733px" width="25" height="23" viewBox="0 0 25 23"><rect x="0.5" y="0.5" width="24" height="22" rx="1.5" fill="#1565b0"/><rect x="3" y="3" width="8" height="17" fill="#f4f4f8"/><rect x="13" y="3" width="9" height="8" fill="#40c0f0"/><rect x="13" y="12" width="9" height="8" fill="#2a9ae8"/></svg>
<svg style="left:500px;top:732px" width="25" height="25" viewBox="0 0 25 25"><circle cx="13" cy="12" r="11.5" fill="#6a6ad8"/><path d="M2 22 L4 15 L9 20z" fill="#6a6ad8"/><rect x="7" y="8" width="8" height="8" rx="1" fill="#fff"/><path d="M15 10 l4-2 v8 l-4-2z" fill="#fff"/></svg>
<svg style="left:544px;top:732px" width="26" height="23" viewBox="0 0 26 23"><path d="M0 2 h9 l2 2 h14 v18 h-25z" fill="#f0b820"/><rect x="0" y="6" width="25" height="16" fill="#fbd040"/><rect x="5" y="14" width="15" height="8" rx="2" fill="#1a78d0"/></svg>
<svg style="left:588px;top:731px" width="26" height="26" viewBox="0 0 26 26"><defs><linearGradient id="eg1" x1="0" y1="0" x2="0" y2="1"><stop offset="0" stop-color="#2a9ae8"/><stop offset="1" stop-color="#0b56a8"/></linearGradient><linearGradient id="eg2" x1="0" y1="0" x2="1" y2="1"><stop offset="0" stop-color="#28b8e8"/><stop offset="1" stop-color="#60d050"/></linearGradient></defs><circle cx="13" cy="13" r="12" fill="url(#eg1)"/><path d="M2.5 8 A12 12 0 0 1 25 13 Q25.5 19 20 19 Q14 19 14 15 Q14 10 8 9.5 Q4 9.5 2.5 8z" fill="url(#eg2)"/><ellipse cx="16.5" cy="15.5" rx="3.2" ry="2.6" fill="#eef4fa"/></svg>
<svg style="left:632px;top:732px" width="25" height="25" viewBox="0 0 25 25"><path d="M7 6 v-3 a2 2 0 0 1 2-2 h7 a2 2 0 0 1 2 2 v3" stroke="#4ab0f0" stroke-width="2" fill="none"/><rect x="0.5" y="5" width="24" height="19" rx="3" fill="#1c4e92"/><rect x="8" y="9" width="4" height="4" fill="#f25022"/><rect x="13" y="9" width="4" height="4" fill="#7fba00"/><rect x="8" y="14" width="4" height="4" fill="#00a4ef"/><rect x="13" y="14" width="4" height="4" fill="#ffb900"/></svg>
<div class="a" style="left:670px;top:725px;width:38px;height:38px;background:#fbf9fc;border-radius:4px"></div>
<svg style="left:674px;top:732px" width="28" height="24" viewBox="0 0 28 24"><defs><radialGradient id="gl" cx="0.35" cy="0.35" r="0.7"><stop offset="0" stop-color="#6ae0a0"/><stop offset="0.5" stop-color="#1a8a9a"/><stop offset="1" stop-color="#0a2a6a"/></radialGradient></defs><circle cx="10" cy="9.5" r="7.5" fill="url(#gl)"/><path d="M10 3 q3 3 1 7 q-2 3 0 6" stroke="#1030a0" stroke-width="2.5" fill="none"/><rect x="14" y="5" width="11" height="11" rx="1" fill="#7a88e8"/><rect x="16" y="7" width="7" height="7" fill="#c0c8f8"/><circle cx="18.5" cy="12" r="3.6" fill="#e8c848" stroke="#9a8a70" stroke-width="0.8"/><path d="M21 15 l3.5 4" stroke="#c8c0a0" stroke-width="1.6"/><path d="M11 18 q5-4 10-1 q-5 3-10 1z" fill="#20a040"/><path d="M4 17 l5 5 M9 17 l-5 5 M6.5 16 v7 M3 19.5 h7" stroke="#e82020" stroke-width="1.2"/></svg>
<div class="a" style="left:681px;top:760px;width:16px;height:3px;background:#1a6ad0;border-radius:2px"></div>
<svg style="left:866px;top:735px" width="18" height="17" viewBox="0 0 18 17"><rect x="0.7" y="3.7" width="11.6" height="8.6" rx="1" fill="none" stroke="#222" stroke-width="1.3"/><path d="M4 15.5 h5 M6.5 12.5 v3" stroke="#222" stroke-width="1.3"/><rect x="12.5" y="0.7" width="4" height="6" rx="1.5" fill="none" stroke="#222" stroke-width="1.1"/><path d="M14.5 7 v8 h-3" stroke="#222" stroke-width="1.1" fill="none"/></svg>
<svg style="left:891px;top:737px" width="16" height="16" viewBox="0 0 16 16"><path d="M1 5 h3 l4-4 v8" stroke="#222" stroke-width="1.2" fill="none"/><path d="M1 5 v5 h2" stroke="#222" stroke-width="1.2" fill="none"/><circle cx="10.5" cy="11" r="4.5" fill="#222"/><path d="M8.7 9.2 l3.6 3.6 M12.3 9.2 l-3.6 3.6" stroke="#fff" stroke-width="1.1"/></svg>
<div class="t " style="left:926.97px;top:729px;font-size:11.700px;line-height:13px;color:#000;font-family:'Liberation Sans',sans-serif;transform:scaleX(1.0097);transform-origin:0 0;">12:36 AM</div>
<div class="t " style="left:921.33px;top:744px;font-size:11.700px;line-height:13px;color:#000;font-family:'Liberation Sans',sans-serif;transform:scaleX(1.0620);transform-origin:0 0;">3/30/2022</div>
<svg style="left:988px;top:736px" width="16" height="16" viewBox="0 0 16 16"><circle cx="8" cy="8" r="8" fill="#1a70d0"/><text x="8" y="12.3" font-size="11" text-anchor="middle" fill="#fff" font-family="Liberation Sans">1</text></svg>
<div class="a" style="left:1018px;top:736px;width:1px;height:17px;background:#888"></div>
<div class="a" style="left:928px;top:678px;width:96px;height:28px;background:#fcfafc;border:1px solid #ece8ec;border-radius:6px;box-shadow:0 1px 2px rgba(0,0,0,0.08)"></div>
<div class="t " style="left:936.71px;top:685px;font-size:11.700px;line-height:13px;color:#000;font-family:'Liberation Sans',sans-serif;transform:scaleX(1.0419);transform-origin:0 0;">Show desktop</div>
</body></html>
